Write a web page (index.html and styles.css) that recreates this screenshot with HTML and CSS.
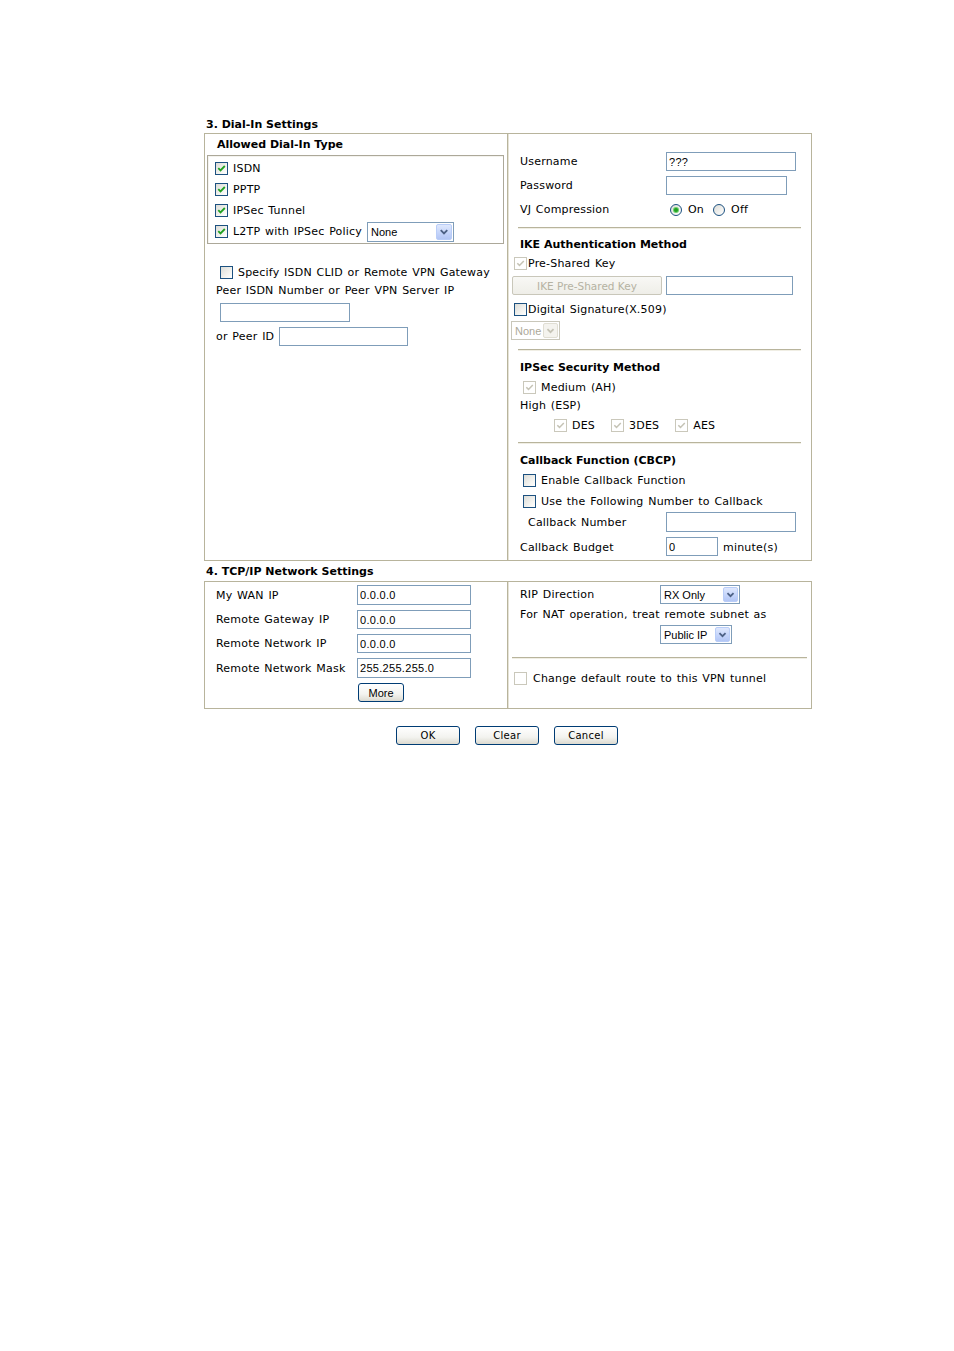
FILE: index.html
```html
<!DOCTYPE html>
<html>
<head>
<meta charset="utf-8">
<title>Dial-In Settings</title>
<link rel="stylesheet" href="styles.css">
</head>
<body>
<div class="page">
  <div class="sec-title">3. Dial-In Settings</div>
  <div class="panel p1">
    <div class="col left">
      <div class="lt-title">Allowed Dial-In Type</div>
      <div class="fs">
        <div class="fr"><span class="cb"><svg viewBox="0 0 11 11" width="11" height="11"><path d="M2.3 5.2 L4.5 7.4 L8.8 3" fill="none" stroke="#21a121" stroke-width="1.8"/></svg></span><span>ISDN</span></div>
        <div class="fr"><span class="cb"><svg viewBox="0 0 11 11" width="11" height="11"><path d="M2.3 5.2 L4.5 7.4 L8.8 3" fill="none" stroke="#21a121" stroke-width="1.8"/></svg></span><span>PPTP</span></div>
        <div class="fr"><span class="cb"><svg viewBox="0 0 11 11" width="11" height="11"><path d="M2.3 5.2 L4.5 7.4 L8.8 3" fill="none" stroke="#21a121" stroke-width="1.8"/></svg></span><span>IPSec Tunnel</span></div>
        <div class="fr"><span class="cb"><svg viewBox="0 0 11 11" width="11" height="11"><path d="M2.3 5.2 L4.5 7.4 L8.8 3" fill="none" stroke="#21a121" stroke-width="1.8"/></svg></span><span>L2TP with IPSec Policy</span>
          <span class="sel sel-l2tp"><span class="sel-txt">None</span><span class="arr"><svg viewBox="0 0 15 15" width="15" height="15"><path d="M4 6 L7.5 9.5 L11 6" fill="none" stroke="#4d6185" stroke-width="2"/></svg></span></span>
        </div>
      </div>
      <div class="specify"><span class="cb"></span><span>Specify ISDN CLID or Remote VPN Gateway</span></div>
      <div class="peer-txt">Peer ISDN Number or Peer VPN Server IP</div>
      <div class="peer-in"><input class="tx w130" type="text"></div>
      <div class="peer-id"><span>or Peer ID</span><input class="tx w129" type="text"></div>
    </div>
    <div class="col right">
      <div class="rr r-user"><span class="lab">Username</span><input class="tx w130" type="text" value="???"></div>
      <div class="rr r-pass"><span class="lab">Password</span><input class="tx w121" type="text"></div>
      <div class="rr r-vj"><span class="lab">VJ Compression</span>
        <span class="rad on"><span class="dot"></span></span><span class="rad-t">On</span>
        <span class="rad off"></span><span class="rad-t">Off</span>
      </div>
      <div class="hr hr1"></div>
      <div class="rr r-title t-ike">IKE Authentication Method</div>
      <div class="rr r-pre"><span class="cb dis"><svg viewBox="0 0 11 11" width="11" height="11"><path d="M2.3 5.2 L4.5 7.4 L8.8 3" fill="none" stroke="#c5c3b5" stroke-width="1.5"/></svg></span><span class="t1">Pre-Shared Key</span></div>
      <div class="rr r-btn"><span class="btn-dis">IKE Pre-Shared Key</span><input class="tx w127" type="text"></div>
      <div class="rr r-dig"><span class="cb"></span><span class="t1">Digital Signature(X.509)</span></div>
      <div class="rr r-dsel"><span class="sel sel-dis"><span class="sel-txt">None</span><span class="arr"><svg viewBox="0 0 15 15" width="15" height="15"><path d="M4 6 L7.5 9.5 L11 6" fill="none" stroke="#c5c3b5" stroke-width="2"/></svg></span></span></div>
      <div class="hr hr2"></div>
      <div class="rr r-title t-ipsec">IPSec Security Method</div>
      <div class="rr r-med"><span class="cb dis"><svg viewBox="0 0 11 11" width="11" height="11"><path d="M2.3 5.2 L4.5 7.4 L8.8 3" fill="none" stroke="#c5c3b5" stroke-width="1.5"/></svg></span><span class="t5">Medium (AH)</span></div>
      <div class="rr r-high">High (ESP)</div>
      <div class="rr r-des">
        <span class="cb dis"><svg viewBox="0 0 11 11" width="11" height="11"><path d="M2.3 5.2 L4.5 7.4 L8.8 3" fill="none" stroke="#c5c3b5" stroke-width="1.5"/></svg></span><span class="t5 d-des">DES</span>
        <span class="cb dis"><svg viewBox="0 0 11 11" width="11" height="11"><path d="M2.3 5.2 L4.5 7.4 L8.8 3" fill="none" stroke="#c5c3b5" stroke-width="1.5"/></svg></span><span class="t5 d-3des">3DES</span>
        <span class="cb dis"><svg viewBox="0 0 11 11" width="11" height="11"><path d="M2.3 5.2 L4.5 7.4 L8.8 3" fill="none" stroke="#c5c3b5" stroke-width="1.5"/></svg></span><span class="t5">AES</span>
      </div>
      <div class="hr hr3"></div>
      <div class="rr r-title t-cb">Callback Function (CBCP)</div>
      <div class="rr r-en"><span class="cb"></span><span class="t5">Enable Callback Function</span></div>
      <div class="rr r-use"><span class="cb"></span><span class="t5">Use the Following Number to Callback</span></div>
      <div class="rr r-cbn"><span class="lab lab-cbn">Callback Number</span><input class="tx w130" type="text"></div>
      <div class="rr r-bud"><span class="lab">Callback Budget</span><input class="tx w52" type="text" value="0"><span class="min">minute(s)</span></div>
    </div>
  </div>

  <div class="sec-title sec4">4. TCP/IP Network Settings</div>
  <div class="panel p2">
    <div class="col left">
      <div class="lr lr1"><span class="lab2">My WAN IP</span><input class="tx w114" type="text" value="0.0.0.0"></div>
      <div class="lr lr2"><span class="lab2">Remote Gateway IP</span><input class="tx w114" type="text" value="0.0.0.0"></div>
      <div class="lr lr3"><span class="lab2">Remote Network IP</span><input class="tx w114" type="text" value="0.0.0.0"></div>
      <div class="lr lr4"><span class="lab2">Remote Network Mask</span><input class="tx w114" type="text" value="255.255.255.0"></div>
      <div class="lr lr5"><button class="btn more" type="button">More</button></div>
    </div>
    <div class="col right">
      <div class="rr r-rip"><span class="lab lab-rip">RIP Direction</span>
        <span class="sel sel-rip"><span class="sel-txt">RX Only</span><span class="arr"><svg viewBox="0 0 15 15" width="15" height="15"><path d="M4 6 L7.5 9.5 L11 6" fill="none" stroke="#4d6185" stroke-width="2"/></svg></span></span>
      </div>
      <div class="rr r-nat">For NAT operation, treat remote subnet as</div>
      <div class="rr r-pub"><span class="sel sel-pub"><span class="sel-txt">Public IP</span><span class="arr"><svg viewBox="0 0 15 15" width="15" height="15"><path d="M4 6 L7.5 9.5 L11 6" fill="none" stroke="#4d6185" stroke-width="2"/></svg></span></span></div>
      <div class="hr hr4"></div>
      <div class="rr r-chg"><span class="cb dis"></span><span class="t6">Change default route to this VPN tunnel</span></div>
    </div>
  </div>

  <div class="actions">
    <button class="btn act" type="button">OK</button>
    <button class="btn act" type="button">Clear</button>
    <button class="btn act" type="button">Cancel</button>
  </div>
</div>
</body>
</html>
```

FILE: styles.css
```css
* { box-sizing: border-box; }
body {
  margin: 0;
  background: #fff;
  color: #000;
  font-family: "DejaVu Sans", Verdana, sans-serif;
  font-size: 11px;
  letter-spacing: 0.2px;
  word-spacing: 1px;
}
.page { width: 608px; margin-left: 204px; padding-top: 118px; }
.sec-title { height: 15px; line-height: 14px; font-weight: bold; padding-left: 2px; letter-spacing: 0; word-spacing: 0; }
.sec4 { height: 20px; line-height: 21px; }

.panel {
  display: grid;
  grid-template-columns: 303px 303px;
  border: 1px solid #b8b49c;
}
.p1 { height: 428px; }
.p2 { height: 128px; }
.col.left { border-right: 1px solid #b8b49c; }
.col.right { box-shadow: inset 1px 0 #e6e3d6; }

/* ---------- left column, section 3 ---------- */
.lt-title { height: 21px; line-height: 21px; padding-left: 12px; font-weight: bold; letter-spacing: 0; word-spacing: 0; }
.fs {
  margin-left: 2px;
  width: 297px;
  height: 89px;
  border: 1px solid #aca899;
  box-shadow: inset 1px 1px #f4f3ee;
  padding-top: 2px;
}
.fr { height: 21px; display: flex; align-items: center; padding-left: 7px; gap: 5px; }
.specify { margin-top: 19px; height: 18px; display: flex; align-items: center; padding-left: 15px; gap: 5px; }
.peer-txt { height: 18px; line-height: 19px; padding-left: 11px; }
.peer-in { margin-top: 4px; padding-left: 15px; height: 19px; }
.peer-id { margin-top: 5px; height: 19px; display: flex; align-items: center; padding-left: 11px; gap: 5px; }

/* ---------- checkbox / radio ---------- */
.cb {
  flex: none;
  width: 13px; height: 13px;
  border: 1px solid #1c5180;
  background: linear-gradient(135deg, #dcdcd7 0%, #f6f6f3 70%, #ffffff 100%);
  display: inline-block;
}
.cb svg { display: block; }
.cb.dis { border-color: #cac8bb; background: #fff; }
.rad {
  flex: none;
  width: 12px; height: 12px;
  border-radius: 50%;
  border: 1px solid #1c5180;
  background: linear-gradient(135deg, #dcdcd7, #ffffff);
  display: inline-flex; align-items: center; justify-content: center;
}
.rad .dot { width: 4px; height: 4px; border-radius: 50%; background: #21a121; box-shadow: 0 0 0 1px #6ccf6c; }
.rad.on { margin-left: 4px; }
.rad.off { margin-left: 9px; }
.rad-t { margin-left: 6px; }

/* ---------- inputs ---------- */
.tx {
  display: block;
  height: 19px;
  border: 1px solid #7f9db9;
  padding: 0 2px;
  margin: 0;
  font-family: "Liberation Sans", Arial, sans-serif;
  font-size: 11px;
  letter-spacing: 0.3px;
  color: #000;
  background: #fff;
  outline: none;
}
.w130 { width: 130px; }
.w129 { width: 129px; }
.w127 { width: 127px; }
.w121 { width: 121px; }
.w114 { width: 114px; }
.w52 { width: 52px; }

/* ---------- selects ---------- */
.sel {
  display: inline-flex;
  align-items: center;
  height: 20px;
  border: 1px solid #7f9db9;
  background: #fff;
  font-family: "Liberation Sans", Arial, sans-serif;
  font-size: 11px;
  letter-spacing: 0;
  word-spacing: 0;
  padding: 1px;
}
.sel-txt { flex: 1; padding-left: 2px; }
.arr {
  flex: none;
  width: 16px; height: 16px;
  border: 1px solid #b9cdf8;
  border-radius: 2px;
  background: linear-gradient(180deg, #dfe8fd 0%, #c3d3fa 60%, #b3c6f5 100%);
  display: flex; align-items: center; justify-content: center;
}
.arr svg { display: block; }
.sel-l2tp { width: 87px; margin-left: 0; }
.sel-dis { width: 49px; height: 19px; border-color: #c9c7ba; color: #aca899; }
.sel-dis .arr { border-color: #e0ded3; background: #f4f3ee; width: 15px; height: 15px; }
.sel-rip { width: 80px; height: 19px; }
.sel-pub { width: 72px; height: 19px; }
.sel-rip .arr, .sel-pub .arr { width: 15px; height: 15px; }

/* ---------- right column rows ---------- */
.rr { display: flex; align-items: center; padding-left: 12px; }
.lab { width: 146px; flex: none; }
.r-user { margin-top: 18px; height: 19px; }
.r-pass { margin-top: 5px; height: 19px; }
.r-vj { margin-top: 5px; height: 19px; }
.hr { height: 1px; background: #b8b49c; box-shadow: 0 1px #f0eee4; }
.hr1 { margin: 8px 0 0 10px; width: 283px; }
.r-title { font-weight: bold; height: 18px; letter-spacing: 0; word-spacing: 0; }
.t-ike { margin-top: 7px; }
.r-pre { margin-top: 1px; height: 18px; padding-left: 6px; }
.t1 { margin-left: 1px; }
.r-btn { margin-top: 4px; height: 19px; padding-left: 4px; }
.btn-dis {
  width: 150px; height: 19px;
  border: 1px solid #c9c7ba;
  border-radius: 2px;
  background: linear-gradient(180deg, #f8f8f5, #efeee8);
  color: #b5b2a2;
  font-size: 10.5px;
  letter-spacing: 0;
  word-spacing: 0;
  display: flex; align-items: center; justify-content: center;
  margin-right: 4px;
}
.r-dig { margin-top: 5px; height: 18px; padding-left: 6px; }
.r-dsel { margin-top: 3px; height: 19px; padding-left: 3px; }
.hr2 { margin: 9px 0 0 10px; width: 283px; }
.t-ipsec { margin-top: 8px; }
.r-med { margin-top: 2px; height: 18px; padding-left: 15px; }
.t5 { margin-left: 5px; }
.r-high { height: 18px; }
.r-des { margin-top: 2px; height: 18px; padding-left: 46px; }
.d-des { margin-right: 16px; }
.d-3des { margin-right: 16px; }
.hr3 { margin: 8px 0 0 10px; width: 283px; }
.t-cb { margin-top: 8px; }
.r-en { margin-top: 2px; height: 18px; padding-left: 15px; }
.r-use { margin-top: 3px; height: 18px; padding-left: 15px; }
.r-cbn { margin-top: 2px; height: 20px; padding-left: 20px; }
.r-cbn .tx { height: 20px; }
.lab-cbn { width: 138px; }
.r-bud { margin-top: 5px; height: 19px; }
.r-bud .lab { padding-top: 1px; }
.min { margin-left: 5px; padding-top: 2px; }

/* ---------- section 4 ---------- */
.lr { display: flex; align-items: center; padding-left: 11px; }
.lab2 { width: 141px; flex: none; }
.lr1 { margin-top: 3px; height: 20px; }
.lr1 .tx { height: 20px; }
.lr2, .lr3 { margin-top: 5px; height: 19px; }
.lr4 { margin-top: 5px; height: 20px; }
.lr4 .tx { height: 20px; }
.lr5 { margin-top: 5px; height: 19px; padding-left: 153px; }

.r-rip { margin-top: 3px; height: 19px; }
.lab-rip { width: 140px; }
.r-nat { margin-top: 1px; height: 18px; }
.r-pub { margin-top: 2px; height: 19px; padding-left: 152px; }
.hr4 { margin: 13px 0 0 4px; width: 295px; }
.r-chg { margin-top: 11px; height: 18px; padding-left: 6px; }
.t6 { margin-left: 6px; }

/* ---------- buttons ---------- */
.btn {
  height: 19px;
  border: 1px solid #003c74;
  border-radius: 3px;
  background: linear-gradient(180deg, #ffffff 0%, #f3f3ef 60%, #dcdad0 100%);
  color: #000;
  padding: 0;
  margin: 0;
  font-size: 10px;
  letter-spacing: 0.3px;
  font-family: "DejaVu Sans", Verdana, sans-serif;
}
.more { width: 46px; font-family: "Liberation Sans", Arial, sans-serif; font-size: 11px; letter-spacing: 0; }
.actions { margin-top: 17px; display: flex; justify-content: center; gap: 15px; padding-right: 2px; }
.act { width: 64px; }
```
